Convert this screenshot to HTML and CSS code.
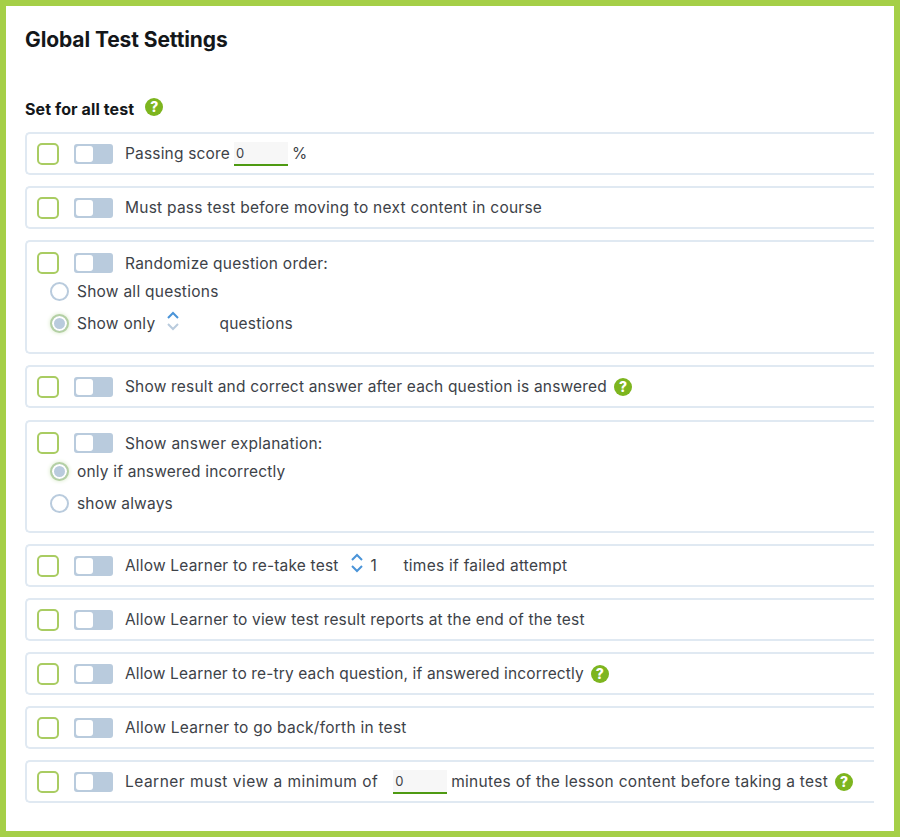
FILE: index.html
```html
<!DOCTYPE html>
<html lang="en">
<head>
    <meta charset="UTF-8">
    <meta name="viewport" content="width=device-width, initial-scale=1.0">
    <title>Global Test Settings</title>
    <link rel="stylesheet" href="styles.css">
</head>
<body>
    <div class="frame">
        <h1>Global Test Settings</h1>
        <h2>Set for all test <span class="help help-head">?</span></h2>

        <div class="card">
            <div class="row">
                <span class="check"></span><span class="toggle"></span>
                <span class="snug">Passing score</span>
                <span class="num num-score">0</span>
                <span>%</span>
            </div>
        </div>

        <div class="card">
            <div class="row">
                <span class="check"></span><span class="toggle"></span>
                <span>Must pass test before moving to next content in course</span>
            </div>
        </div>

        <div class="card card-tall">
            <div class="row row-head">
                <span class="check"></span><span class="toggle"></span>
                <span>Randomize question order:</span>
            </div>
            <div class="option option-first"><span class="radio"></span><span>Show all questions</span></div>
            <div class="option">
                <span class="radio on"></span><span>Show only</span>
                <svg class="stepper stepper-faint" viewBox="0 0 14 24"><path class="up" d="M2 9l5-5 5 5"/><path class="down" d="M2 15l5 5 5-5"/></svg>
                <span class="after-stepper">questions</span>
            </div>
        </div>

        <div class="card">
            <div class="row">
                <span class="check"></span><span class="toggle"></span>
                <span class="snug">Show result and correct answer after each question is answered</span>
                <span class="help">?</span>
            </div>
        </div>

        <div class="card card-tall card-answer">
            <div class="row row-head">
                <span class="check"></span><span class="toggle"></span>
                <span>Show answer explanation:</span>
            </div>
            <div class="option option-first"><span class="radio on"></span><span class="snug">only if answered incorrectly</span></div>
            <div class="option"><span class="radio"></span><span class="snug">show always</span></div>
        </div>

        <div class="card">
            <div class="row">
                <span class="check"></span><span class="toggle"></span>
                <span class="snug">Allow Learner to re-take test</span>
                <svg class="stepper" viewBox="0 0 14 24"><path class="up" d="M2 9l5-5 5 5"/><path class="down" d="M2 15l5 5 5-5"/></svg>
                <span class="count">1</span>
                <span>times if failed attempt</span>
            </div>
        </div>

        <div class="card">
            <div class="row">
                <span class="check"></span><span class="toggle"></span>
                <span class="snug">Allow Learner to view test result reports at the end of the test</span>
            </div>
        </div>

        <div class="card">
            <div class="row">
                <span class="check"></span><span class="toggle"></span>
                <span class="tight">Allow Learner to re-try each question, if answered incorrectly</span>
                <span class="help">?</span>
            </div>
        </div>

        <div class="card">
            <div class="row">
                <span class="check"></span><span class="toggle"></span>
                <span>Allow Learner to go back/forth in test</span>
            </div>
        </div>

        <div class="card">
            <div class="row">
                <span class="check"></span><span class="toggle"></span>
                <span class="wide">Learner must view a minimum of</span>
                <span class="num num-minutes">0</span>
                <span class="loose">minutes of the lesson content before taking a test</span>
                <span class="help">?</span>
            </div>
        </div>
    </div>
</body>
</html>
```

FILE: styles.css
```css
* {
    box-sizing: border-box;
}
body {
    margin: 0;
    background-color: #fff;
    font-family: Inter, "Liberation Sans", sans-serif;
    font-size: 15.5px;
    color: #3d4248;
}
.frame {
    width: 900px;
    height: 837px;
    padding: 0 20px 0 19px;
    border: 6px solid #a5cf47;
    overflow: hidden;
}
h1 {
    margin: 21px 0 0;
    font-size: 21px;
    line-height: 26px;
    font-weight: 700;
    letter-spacing: -0.1px;
    color: #14171a;
}
h2 {
    display: flex;
    align-items: center;
    margin: 44px 0 11px;
    font-size: 16px;
    line-height: 24px;
    font-weight: 700;
    letter-spacing: 0.1px;
    color: #14171a;
}
.card {
    height: 43px;
    margin-bottom: 11px;
    padding-left: 10px;
    border: 2px solid #e0e9f2;
    border-right: 0;
    border-radius: 5px 0 0 5px;
}
.card-tall {
    height: 114px;
}
.card-answer {
    height: 113px;
    margin-top: 12px;
}
.row {
    display: flex;
    align-items: center;
    height: 39px;
    letter-spacing: 0.25px;
}
.row-head {
    height: 42px;
}
.snug {
    letter-spacing: 0.18px;
}
.tight {
    letter-spacing: 0.14px;
}
.wide {
    letter-spacing: 0.48px;
}
.loose {
    letter-spacing: 0.29px;
}
.check {
    flex: none;
    width: 22px;
    height: 22px;
    margin-right: 15px;
    border: 2px solid #a9cc62;
    border-radius: 5px;
}
.toggle {
    flex: none;
    width: 39px;
    height: 20px;
    margin-right: 12px;
    padding: 2px;
    border-radius: 3px;
    background-color: #b9cbdd;
}
.toggle::before {
    content: "";
    display: block;
    width: 17px;
    height: 16px;
    border-radius: 3px;
    background-color: #fff;
}
.num {
    width: 54px;
    height: 24px;
    padding: 2px 0 0 2px;
    border-bottom: 2px solid #4e9a12;
    background-color: #f7f7f7;
    font-size: 13px;
    line-height: 19px;
}
.num-score {
    margin: 1px 4px 0 4px;
}
.num-minutes {
    margin: 1px 4px 0 15px;
}
.help {
    flex: none;
    display: inline-block;
    width: 18px;
    height: 18px;
    margin-left: 7px;
    border-radius: 50%;
    background-color: #7db51f;
    color: #fff;
    font-size: 14px;
    font-weight: 800;
    line-height: 18px;
    text-align: center;
    letter-spacing: 0;
}
.help-head {
    margin-left: 11px;
    margin-bottom: 4px;
}
.option {
    display: flex;
    align-items: center;
    height: 32px;
    padding-left: 13px;
    letter-spacing: 0.25px;
}
.option-first {
    margin-top: -9px;
}
.radio {
    flex: none;
    width: 19px;
    height: 19px;
    margin-right: 8px;
    border: 2px solid #b9cbdd;
    border-radius: 50%;
    background-color: #fff;
}
.radio.on {
    border-color: #b4d0a4;
    background-color: #b9cbdd;
    box-shadow: inset 0 0 0 2px #fff, 0 0 4px #d6e8c6;
}
.stepper {
    flex: none;
    width: 14px;
    height: 24px;
    margin: 0 0 5px 11px;
    fill: none;
    stroke-width: 2;
}
.stepper .up,
.stepper .down {
    stroke: #4a94d8;
}
.stepper-faint .down {
    stroke: #b9cbdd;
}
.after-stepper {
    margin-left: 39px;
}
.count {
    width: 33px;
    margin-left: 7px;
}
```
